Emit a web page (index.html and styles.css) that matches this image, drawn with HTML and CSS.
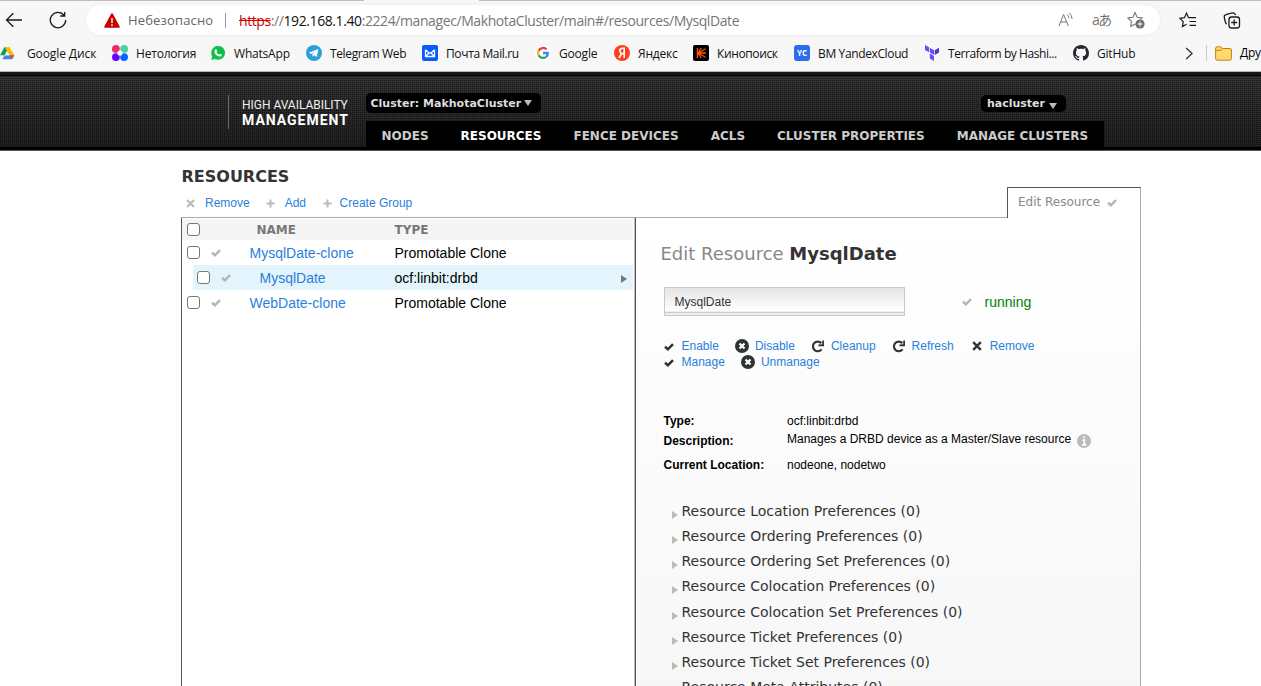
FILE: index.html
```html
<!DOCTYPE html>
<html lang="ru">
<head>
<meta charset="utf-8">
<title>High Availability Management</title>
<link rel="stylesheet" href="styles.css">
</head>
<body>
<svg class="defs" width="0" height="0">
  <symbol id="check" viewBox="0 0 10 8"><path d="M1 3.7 3.9 6.3 9 1.2" fill="none" stroke="currentColor" stroke-width="2.5"/></symbol>
  <symbol id="cross" viewBox="0 0 10 10"><path d="M1.2 1.2 8.8 8.8M8.8 1.2 1.2 8.8" fill="none" stroke="currentColor" stroke-width="2.4"/></symbol>
  <symbol id="plus" viewBox="0 0 10 10"><path d="M5 .6V9.4M.6 5H9.4" fill="none" stroke="currentColor" stroke-width="2.2"/></symbol>
  <symbol id="off" viewBox="0 0 14 14"><circle cx="7" cy="7" r="7" fill="currentColor"/><path d="M4.5 4.5 9.5 9.5M9.5 4.5 4.5 9.5" stroke="#fff" stroke-width="2.2"/></symbol>
  <symbol id="reload" viewBox="0 0 14 13"><path d="M10.3 3.2A4.8 4.8 0 1 0 10.6 9.3" fill="none" stroke="currentColor" stroke-width="2.2"/><path d="M13 .6V6.2H7.4V4.6L11.3 4.3 11.2.6Z" fill="currentColor"/></symbol>
</svg>

<div class="browser">
  <div class="tabline"><i></i><i></i></div>
  <div class="toolbar">
    <svg class="back" width="18" height="16" viewBox="0 0 18 16"><path d="M17 8H1.5M8.3 1.2 1.5 8 8.3 14.8" fill="none" stroke="#1b1b1b" stroke-width="1.3"/></svg>
    <svg class="refresh" width="18" height="18" viewBox="0 0 18 18"><path d="M15.2 4.5A7.7 7.7 0 1 0 16.7 9M15.7 1V5H11.2" fill="none" stroke="#1b1b1b" stroke-width="1.3"/></svg>
    <div class="address">
      <svg width="16" height="15" viewBox="0 0 16 15"><path d="M8 1 15 14H1Z" fill="#c00" stroke="#c00" stroke-width="1.6" stroke-linejoin="round"/><path d="M8 5V10M8 11.3V13" stroke="#fff" stroke-width="1.4"/></svg>
      <span class="unsafe">Небезопасно</span>
      <span class="sep"></span>
      <span class="url"><s>https</s>://<b>192.168.1.40</b>:2224/managec/MakhotaCluster/main#/resources/MysqlDate</span>
      <span class="tools">
        <svg width="16" height="16" viewBox="0 0 16 16" fill="none" stroke="#767676"><path d="M1 14 5.6 2.5 10.3 14M2.7 10H8.7M9.3 2.5A5 5 0 0 1 10.8 6.3M11.2 1A7 7 0 0 1 14 7"/></svg>
        <span class="translate">aあ</span>
        <svg width="18" height="18" viewBox="0 0 18 18"><path d="M8.5 13 3.7 15.3 4.4 10.4 1 6.9 5.9 6.2 8 1.6 10.2 6.2 15 6.9 13.5 8.4" fill="none" stroke="#767676" stroke-width="1.1"/><circle cx="13" cy="13" r="4.6" fill="#6e6e6e"/><path d="M13 10.5V15.5M10.5 13H15.5" stroke="#fff"/></svg>
      </span>
    </div>
    <svg class="favs" width="18" height="17" viewBox="0 0 18 17" fill="none" stroke="#1b1b1b" stroke-width="1.2"><path d="M17 5.7H9.6L7.5 1.2 5.4 5.7 1 6.3 4.2 9.6 3.4 14.6 7.5 12.2M10.5 9.5H17M10.5 13.4H17"/></svg>
    <svg class="collections" width="18" height="17" viewBox="0 0 18 17" fill="none" stroke="#1b1b1b" stroke-width="1.3"><path d="M3.5 12.2C2.3 11 1 5 1.3 3.8 1.6 2.4 9.5.7 10.7 1 11.8 1.4 12.3 2.2 12.5 3.2"/><rect x="6" y="5" width="10.5" height="11" rx="2.5"/><path d="M11.2 7.5V13.5M8.2 10.5H14.2"/></svg>
  </div>
  <div class="bookmarks">
    <div class="bm drive"><svg viewBox="0 0 16 16"><path d="M5.5 2H10.5L5.6 10.3H1Z" fill="#0f9d58"/><path d="M10.5 2 15.3 10.3H10.5L5.6 2Z" fill="#fbbc05"/><path d="M1 10.3 3.4 14.3H13L15.3 10.3H5.6L3.4 14.3Z" fill="#4285f4"/><path d="M8 6.3 10.3 10.3H5.7Z" fill="#f6f6f6"/><path d="M10.8 10.3H15.3L13 14.3Z" fill="#ea4335"/></svg><span>Google Диск</span></div>
    <div class="bm"><svg viewBox="0 0 16 16"><circle cx="3.9" cy="3.9" r="3.9" fill="#ed2d6b"/><circle cx="12.1" cy="3.9" r="3.9" fill="#4bd0a0"/><circle cx="3.9" cy="12.1" r="3.9" fill="#6a00ff"/><circle cx="12.1" cy="12.1" r="3.9" fill="#0066ff"/><circle cx="8" cy="8" r="2.6" fill="#f7f7f7"/></svg><span>Нетология</span></div>
    <div class="bm"><svg viewBox="0 0 16 16"><path d="M1.2 15 2.2 11.4A6.9 6.9 0 1 1 5 14Z" fill="#0cc143"/><path d="M5.3 4.3 6.5 4.4 7.2 6.2 6.5 7.2Q7.4 8.9 9.1 9.6L10 8.8 11.8 9.7Q11.8 11.5 9.7 11.6 5.6 11.3 4.4 7.1 4.3 5.2 5.3 4.3Z" fill="#fff"/></svg><span>WhatsApp</span></div>
    <div class="bm tight"><svg viewBox="0 0 16 16"><circle cx="8" cy="8" r="8" fill="#2ca0da"/><path d="M2.8 7.8 12.3 4 10.8 12 8 10.3 6.6 11.7 6.4 9.1 10.2 5.9 5.3 8.9Z" fill="#fff"/></svg><span>Telegram Web</span></div>
    <div class="bm tight"><svg viewBox="0 0 16 16"><rect width="16" height="16" rx="2" fill="#075cff"/><path d="M3.5 4.8V11.5H12.5V4.8M3.5 4.8 7 8 3.7 11.3M12.5 4.8 9 8 12.3 11.3M7 8H9" fill="none" stroke="#fff" stroke-width="1.3"/></svg><span>Почта Mail.ru</span></div>
    <div class="bm"><svg viewBox="0 0 16 16"><circle cx="8" cy="8" r="8" fill="#fff"/><g fill="none" stroke-width="2.3"><path d="M11.6 4.4A5 5 0 0 0 3.6 5.8" stroke="#ea4335"/><path d="M3.6 5.8A5 5 0 0 0 3.6 10.2" stroke="#fbbc05"/><path d="M3.6 10.2A5 5 0 0 0 11.2 11.8" stroke="#34a853"/><path d="M11.2 11.8Q13 10.5 12.8 8H8" stroke="#4285f4"/></g></svg><span>Google</span></div>
    <div class="bm"><svg viewBox="0 0 16 16"><circle cx="8" cy="8" r="8" fill="#fc3f1d"/><path d="M10.2 13V3.3H8.6Q5.7 3.5 5.8 6 5.9 7.3 7.5 8.4L5 13M9.8 8.6H8" fill="none" stroke="#fff" stroke-width="1.6"/></svg><span>Яндекс</span></div>
    <div class="bm tight"><svg viewBox="0 0 16 16"><rect width="16" height="16" rx="2" fill="#000"/><path d="M4.4 3V13M5 8 8.2 3M5.2 8 12.5 3.7M6 8H13M5.2 8.2 12.5 12.3M5 8 8.2 13" stroke="#f50" stroke-width="1.3"/></svg><span>Кинопоиск</span></div>
    <div class="bm tight"><svg viewBox="0 0 16 16"><rect width="16" height="16" rx="3" fill="#2d6de9"/><text class="yc" x="8" y="11.4" text-anchor="middle">YC</text></svg><span>ВМ YandexCloud</span></div>
    <div class="bm tighter"><svg viewBox="0 0 16 16"><path d="M1 0 5 2.3V7.2L1 5ZM5.8 2.8 10 5.2V10L5.8 7.6ZM5.8 8.5 10 11V16L5.8 13.4Z" fill="#6d4aff"/><path d="M10.7 5.2 15 2.8V7.6L10.7 10Z" fill="#5036c5"/></svg><span>Terraform by Hashi...</span></div>
    <div class="bm"><svg viewBox="0 0 16 16"><path d="M8 0C3.58 0 0 3.58 0 8c0 3.54 2.29 6.53 5.47 7.59.4.07.55-.17.55-.38 0-.19-.01-.82-.01-1.49-2.01.37-2.53-.49-2.69-.94-.09-.23-.48-.94-.82-1.13-.28-.15-.68-.52-.01-.53.63-.01 1.08.58 1.23.82.72 1.21 1.87.87 2.33.66.07-.52.28-.87.51-1.07-1.78-.2-3.64-.89-3.64-3.95 0-.87.31-1.59.82-2.15-.08-.2-.36-1.02.08-2.12 0 0 .67-.21 2.2.82.64-.18 1.32-.27 2-.27s1.36.09 2 .27c1.53-1.04 2.2-.82 2.2-.82.44 1.1.16 1.92.08 2.12.51.56.82 1.27.82 2.15 0 3.07-1.87 3.75-3.65 3.95.29.25.54.73.54 1.48 0 1.07-.01 1.93-.01 2.2 0 .21.15.46.55.38A8.01 8.01 0 0 0 16 8c0-4.42-3.58-8-8-8Z" fill="#24292f"/></svg><span>GitHub</span></div>
    <svg class="more" width="9" height="13" viewBox="0 0 9 13"><path d="M1.2 1 7 6.5 1.2 12" fill="none" stroke="#333" stroke-width="1.3"/></svg>
    <div class="folder"><svg viewBox="0 0 17 15"><path d="M.6 2.5Q.6.8 2.2.8H5.5L7.5 2.5H15Q16.4 2.5 16.4 4V12.6Q16.4 14.2 14.8 14.2H2.2Q.6 14.2.6 12.6Z" fill="#ffd970" stroke="#b8860b"/><path d="M.8 4.3H5.5L7.3 2.7" fill="none" stroke="#b8860b"/></svg><span>Дру</span></div>
  </div>
</div>

<header class="masthead">
  <div class="brand"><span>HIGH AVAILABILITY</span><strong>MANAGEMENT</strong></div>
  <div class="menus">
    <div class="pills">
      <div class="pill cluster">Cluster: MakhotaCluster<i></i></div>
      <div class="pill user">hacluster<i></i></div>
    </div>
    <nav><a>NODES</a><a class="active">RESOURCES</a><a>FENCE DEVICES</a><a>ACLS</a><a>CLUSTER PROPERTIES</a><a>MANAGE CLUSTERS</a></nav>
  </div>
</header>

<main>
  <div class="top">
    <div class="heading">
      <h1>RESOURCES</h1>
      <div class="listactions">
        <svg><use href="#cross"/></svg><a>Remove</a>
        <svg><use href="#plus"/></svg><a>Add</a>
        <svg class="group"><use href="#plus"/></svg><a>Create Group</a>
      </div>
    </div>
    <div class="tab">Edit Resource<svg class="tick"><use href="#check"/></svg></div>
  </div>
  <div class="panes">
    <section class="list">
      <div class="row head"><i class="box"></i><span></span><span class="name">NAME</span><span>TYPE</span></div>
      <div class="row"><i class="box"></i><svg class="tick"><use href="#check"/></svg><a>MysqlDate-clone</a><span>Promotable Clone</span></div>
      <div class="row child"><i class="box"></i><svg class="tick"><use href="#check"/></svg><a>MysqlDate</a><span>ocf:linbit:drbd</span><i class="arrow"></i></div>
      <div class="row"><i class="box"></i><svg class="tick"><use href="#check"/></svg><a>WebDate-clone</a><span>Promotable Clone</span></div>
    </section>
    <section class="detail">
      <h2>Edit Resource <b>MysqlDate</b></h2>
      <div class="status"><div class="input">MysqlDate</div><svg class="tick"><use href="#check"/></svg><span>running</span></div>
      <div class="actions">
        <div><svg class="sm"><use href="#check"/></svg><a>Enable</a><svg><use href="#off"/></svg><a>Disable</a><svg><use href="#reload"/></svg><a>Cleanup</a><svg><use href="#reload"/></svg><a>Refresh</a><svg class="x"><use href="#cross"/></svg><a>Remove</a></div>
        <div><svg class="sm"><use href="#check"/></svg><a>Manage</a><svg><use href="#off"/></svg><a>Unmanage</a></div>
      </div>
      <dl>
        <dt>Type:</dt><dd>ocf:linbit:drbd</dd>
        <dt>Description:</dt><dd class="desc">Manages a DRBD device as a Master/Slave resource<svg width="14" height="14" viewBox="0 0 14 14"><circle cx="7" cy="7" r="7" fill="#bbb"/><path d="M5.3 6H7.3V10.5M5 10.8H9.2M6.2 3.4H8.2" fill="none" stroke="#fff" stroke-width="1.7"/></svg></dd>
        <dt>Current Location:</dt><dd>nodeone, nodetwo</dd>
      </dl>
      <ul>
        <li>Resource Location Preferences (0)</li>
        <li>Resource Ordering Preferences (0)</li>
        <li>Resource Ordering Set Preferences (0)</li>
        <li>Resource Colocation Preferences (0)</li>
        <li>Resource Colocation Set Preferences (0)</li>
        <li>Resource Ticket Preferences (0)</li>
        <li>Resource Ticket Set Preferences (0)</li>
        <li>Resource Meta Attributes (0)</li>
      </ul>
    </section>
  </div>
</main>
</body>
</html>
```
FILE: styles.css
```css
* { box-sizing: border-box; }
body { margin: 0; height: 686px; overflow: hidden; background: #fff; color: #000; font: 12px "Liberation Sans", Arial, sans-serif; display: flex; flex-direction: column; }
.defs { display: block; flex: none; position: absolute; }
svg { display: block; flex: none; }
a { color: #2a7fdb; }

/* Browser chrome */
.browser { height: 72px; flex: none; background: #f7f7f7; border-bottom: 1px solid #b4b4b4; font-family: "Open Sans", "Noto Sans", sans-serif; overflow: hidden; }
.tabline { display: flex; justify-content: space-between; height: 1px; }
.tabline i { background: #bebebe; width: 364px; }
.tabline i + i { width: 782px; }
.toolbar { display: flex; align-items: center; height: 38px; padding-left: 5px; }
.refresh { margin-left: 26px; }
.address { display: flex; align-items: center; width: 1074px; height: 30px; margin-left: 19px; padding-left: 18px; background: #fff; border-radius: 15px; box-shadow: 0 0 3px #e4e4e4; }
.unsafe { width: 87px; margin-left: 8px; font-size: 13px; color: #666; white-space: nowrap; letter-spacing: .15px; }
.sep { width: 1px; height: 15px; margin-left: 10px; background: #999; }
.url { margin-left: 13px; width: 502px; font-size: 14px; letter-spacing: -.41px; color: #767676; white-space: nowrap; }
.url b { font-weight: 400; color: #111; }
.url s { color: #c00; }
.tools { display: flex; align-items: center; margin-left: 317px; }
.translate { width: 19px; margin: -2px 16px 0 18px; color: #767676; font: 14px "Open Sans", "Noto Sans CJK JP", sans-serif; letter-spacing: -1.5px; white-space: nowrap; }
.favs { margin-left: 19px; }
.collections { margin-left: 26px; }
.bookmarks { display: grid; grid-template-columns: 112px 98px 96px 116px 113px 79px 79px 101px 130px 149px 112px 21px 60px; align-items: center; height: 28px; }
.bm { display: flex; align-items: center; gap: 8px; white-space: nowrap; color: #111; letter-spacing: -.2px; }
.bm.tight { letter-spacing: -.37px; }
.bm.tighter { letter-spacing: -.43px; }
.bm.drive { gap: 11px; letter-spacing: -.1px; }
.bm svg { width: 16px; height: 16px; }
.bm.drive svg { margin-left: -1px; margin-right: 1px; }
.yc { font: bold 8px "Open Sans", sans-serif; fill: #fff; letter-spacing: 0; }
.folder { display: flex; align-items: center; gap: 8px; height: 16px; padding-left: 8px; border-left: 1px solid #ccc; white-space: nowrap; line-height: 16px; letter-spacing: -.3px; }
.folder svg { width: 17px; height: 15px; }

/* Application header */
.masthead { display: flex; height: 79px; flex: none; padding-left: 228px; border-bottom: 1px solid #555; font-family: "DejaVu Sans", sans-serif; font-weight: bold; color: #ddd;
  background: linear-gradient(#000, #000) 0 100% / 100% 3px no-repeat, linear-gradient(#151515, #151515) 0 0 / 100% 3px no-repeat, linear-gradient(#000, #000) 0 3px / 100% 1px no-repeat, radial-gradient(circle at .5px .5px, rgba(0,0,0,.5) .6px, transparent .7px) 0 0 / 2px 2px, linear-gradient(#343434, #1e1e1e); }
.brand { display: flex; flex-direction: column; width: 138px; height: 34px; margin-top: 23px; padding: 3px 0 0 13px; border-left: 1px solid #666; font: 12px/14px Roboto, sans-serif; color: #eee; white-space: nowrap; }
.brand span { letter-spacing: -.03px; }
.brand strong { font-size: 14px; line-height: 17px; letter-spacing: 1px; color: #fff; }
.menus { width: 738px; }
.pills { display: flex; justify-content: space-between; height: 49px; padding: 21px 38px 0 0; }
.pill { display: flex; align-items: center; height: 20px; padding: 0 9px 0 4.5px; background: #000; border-radius: 5px; font-size: 11px; }
.pill i { margin: -1px 0 0 3px; border: 4px solid transparent; border-top: 6px solid #bbb; border-bottom: 0; }
.user { height: 17px; margin-top: 2px; padding-left: 5.5px; }
.user i { margin: 4px 0 0 4px; }
nav { display: flex; height: 29px; background: #000; font-size: 12px; line-height: 31px; white-space: nowrap; }
nav a { padding: 0 16px; color: #ccc; position: relative; left: -.5px; }
nav .active { color: #fff; }

/* Page content */
main { width: 960px; margin-left: 181px; }
.top { display: flex; align-items: flex-end; height: 67px; }
.heading { width: 826px; height: 67px; padding-top: 16px; border-bottom: 1px solid #aaa; }
h1 { margin: 0 0 0 .5px; font: bold 16px/20px "DejaVu Sans", sans-serif; color: #333; }
.listactions { display: flex; align-items: center; height: 16px; margin-top: 8px; padding-left: 5px; color: #bbb; }
.listactions svg { width: 9px; height: 9px; margin-right: 10px; }
.listactions .group { margin: 0 8px 0 1px; }
.listactions a { margin-right: 16px; }
.listactions a:last-child { margin-left: -.5px; }
.tab { display: flex; align-items: center; width: 134px; height: 31px; padding: 0 0 2px 10px; border: 1px solid #555; border-right-color: #aaa; border-bottom: 0; font: 12px "DejaVu Sans", sans-serif; color: #888; }
.tick { width: 10px; height: 8px; color: #b1b7b9; }
.tab .tick { margin: 2px 0 0 7px; }
.panes { display: flex; height: 468px; }
.list { width: 455px; border-left: 1px solid #555; border-right: 1px solid #555; font-size: 14px; box-shadow: inset -1px 0 #bbb; padding: 1px 2px 0 0; }
.row { display: grid; grid-template-columns: 24px 38.5px 145px 1fr auto; align-items: center; height: 25px; padding-left: 5px; line-height: 25px; padding-top: 1px; }
.row .tick, .row .box { margin-top: -2px; }
.head { height: 21px; padding-top: 0; background: #f5f5f5; color: #777; font: bold 12px "DejaVu Sans", sans-serif; }
.head .box { margin-top: -1px; }
.name { padding-left: 7px; }
.box { display: block; width: 13px; height: 13px; border: 1px solid #777; border-radius: 3px; background: #fff; }
.child { margin-left: 11px; padding-left: 4px; grid-template-columns: 24px 38.5px 135px 1fr auto; background: #e3f4fd; }
.arrow { margin-right: 6px; border: 4.5px solid transparent; border-left: 6px solid #777; border-right: 0; }
.detail { width: 505px; padding-left: 28px; border-right: 1px solid #aaa; background: linear-gradient(#fff, #f7f7f7); overflow: hidden; }
h2 { margin: 24px 0 0 -3.5px; height: 45px; font: 18px/24px "DejaVu Sans", sans-serif; color: #888; }
h2 b { color: #333; }
.status { display: flex; align-items: center; height: 29px; color: green; font-size: 14px; }
.input { width: 241px; height: 29px; padding-left: 9.5px; border: 1px solid #c8c8c8; background: linear-gradient(#ccc, #ccc) 0 24px / 100% 1px no-repeat, linear-gradient(#e5e5e5, #fff 85%, #eee 86%); font-size: 12px; line-height: 29px; color: #333; }
.status .tick { margin: 0 12.5px 0 57px; }
.actions { height: 75px; margin-top: 22px; }
.actions div { display: flex; align-items: center; height: 16px; color: #2e3436; }
.actions svg { width: 14px; height: 13px; margin-right: 6px; }
.actions .sm { width: 10px; height: 8px; margin: 2px 7.5px 0 0; }
.actions .x { width: 10px; height: 10px; margin: 0 8px 0 2px; }
.actions a { margin-right: 16px; }
.actions svg:has(use[href="#off"]) { height: 14px; }
dl { display: grid; grid-template-columns: 123.5px 1fr; grid-template-rows: 20px 24px 20px; margin: 0 0 0 -.5px; height: 86px; line-height: 16px; }
dt { font-weight: bold; }
dd { margin: 0; }
.desc { display: flex; gap: 6px; margin-top: -2px; }
.desc svg { margin-top: 3px; }
ul { margin: 0; padding: 0; list-style: none; font: 14px/25px "DejaVu Sans", sans-serif; color: #333; }
li { display: flex; align-items: center; height: 25px; padding-left: 8px; }
li:nth-child(4) { margin-bottom: 1px; }
li::before { content: ""; margin: 6px 3.5px 0 0; border: 4.5px solid transparent; border-left: 6px solid #bbb; border-right: 0; }
```
